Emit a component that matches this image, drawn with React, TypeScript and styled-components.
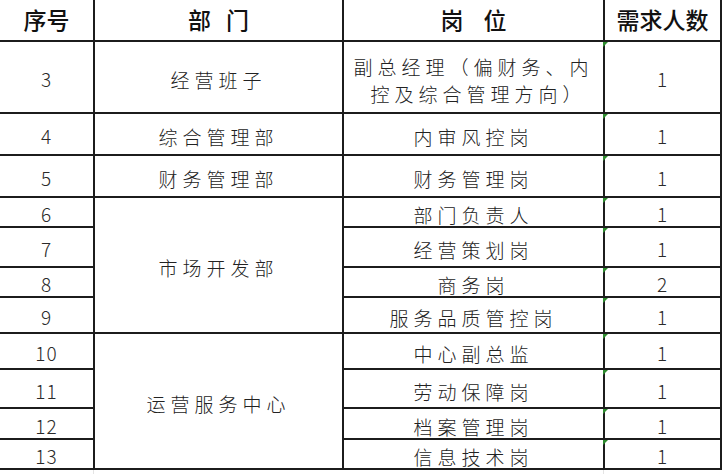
import React from 'react';
import styled, { createGlobalStyle } from 'styled-components';

const GlobalStyle = createGlobalStyle`
  html, body {
    margin: 0;
    padding: 0;
    background: #ffffff;
  }
  body {
    font-family: "Noto Sans CJK SC", "Liberation Sans", sans-serif;
  }
`;

const LINE = '#1c1c1c';

const Sheet = styled.div`
  display: grid;
  grid-template-columns: 95px 249px 261px 117px;
  grid-template-rows: 42px 72px 42px 42px 30px 40px 30px 36px 36px 39px 31px 30px 4px;
  width: 722px;
`;

const Cell = styled.div`
  box-sizing: border-box;
  position: relative;
  display: flex;
  align-items: center;
  justify-content: center;
  border-right: 2px solid ${LINE};
  border-bottom: 2px solid ${LINE};
  color: #222;
`;

const HeadCell = styled(Cell)<{ $gap?: number }>`
  font-family: "Noto Sans CJK SC", sans-serif;
  font-size: 23px;
  font-weight: 500;
  color: #111;
  word-spacing: ${(p) => p.$gap ?? 0}px;
  white-space: pre;
  padding-bottom: 2px;
`;

const NumCell = styled(Cell)`
  font-family: "Noto Sans CJK SC", "Liberation Sans", sans-serif;
  font-weight: 300;
  font-size: 19px;
  letter-spacing: 1px;
  color: #2a2a2a;
  padding-top: 3px;
`;

const TextCell = styled(Cell)<{ $span?: number }>`
  grid-row: span ${(p) => p.$span ?? 1};
  flex-direction: column;
  font-family: "Noto Sans CJK SC", sans-serif;
  font-weight: 300;
  font-size: 19px;
  letter-spacing: 5px;
  line-height: 27px;
  padding-top: 5px;
  text-align: center;
`;

const Line = styled.span<{ $indent?: number }>`
  display: block;
  white-space: nowrap;
  padding-left: ${(p) => p.$indent ?? 0}px;
`;

const CountCell = styled(NumCell)`
  &::before {
    content: '';
    position: absolute;
    left: -2px;
    top: 0;
    border-top: 5px solid #2e8b2e;
    border-right: 5px solid transparent;
  }
`;

const Spill = styled.div<{ $line?: boolean }>`
  border-right: 1px solid ${(p) => (p.$line ? '#e4e4e4' : 'transparent')};
  margin-right: 1px;
`;

type Row = {
  no: number;
  dept?: string;
  span?: number;
  post: string;
  count?: number;
};

const rows: Row[] = [
  { no: 3, dept: '经营班子', post: '副总经理（偏财务、内\n控及综合管理方向）' },
  { no: 4, dept: '综合管理部', post: '内审风控岗' },
  { no: 5, dept: '财务管理部', post: '财务管理岗' },
  { no: 6, dept: '市场开发部', span: 4, post: '部门负责人' },
  { no: 7, post: '经营策划岗' },
  { no: 8, post: '商务岗', count: 2 },
  { no: 9, post: '服务品质管控岗' },
  { no: 10, dept: '运营服务中心', span: 4, post: '中心副总监' },
  { no: 11, post: '劳动保障岗' },
  { no: 12, post: '档案管理岗' },
  { no: 13, post: '信息技术岗' },
];

export default function App() {
  return (
    <>
      <GlobalStyle />
      <Sheet>
        <HeadCell>序号</HeadCell>
        <HeadCell $gap={10}>部 门</HeadCell>
        <HeadCell $gap={15}>岗 位</HeadCell>
        <HeadCell>需求人数</HeadCell>

        {rows.map((r) => (
          <React.Fragment key={r.no}>
            <NumCell>{r.no}</NumCell>
            {r.dept && <TextCell $span={r.span}>{r.dept}</TextCell>}
            <TextCell>
              {r.post.split('\n').map((l, i) => (
                <Line key={l} $indent={i > 0 ? 10 : 0}>
                  {l}
                </Line>
              ))}
            </TextCell>
            <CountCell>{r.count ?? 1}</CountCell>
          </React.Fragment>
        ))}

        <Spill $line />
        <Spill />
        <Spill $line />
        <Spill />
      </Sheet>
    </>
  );
}
